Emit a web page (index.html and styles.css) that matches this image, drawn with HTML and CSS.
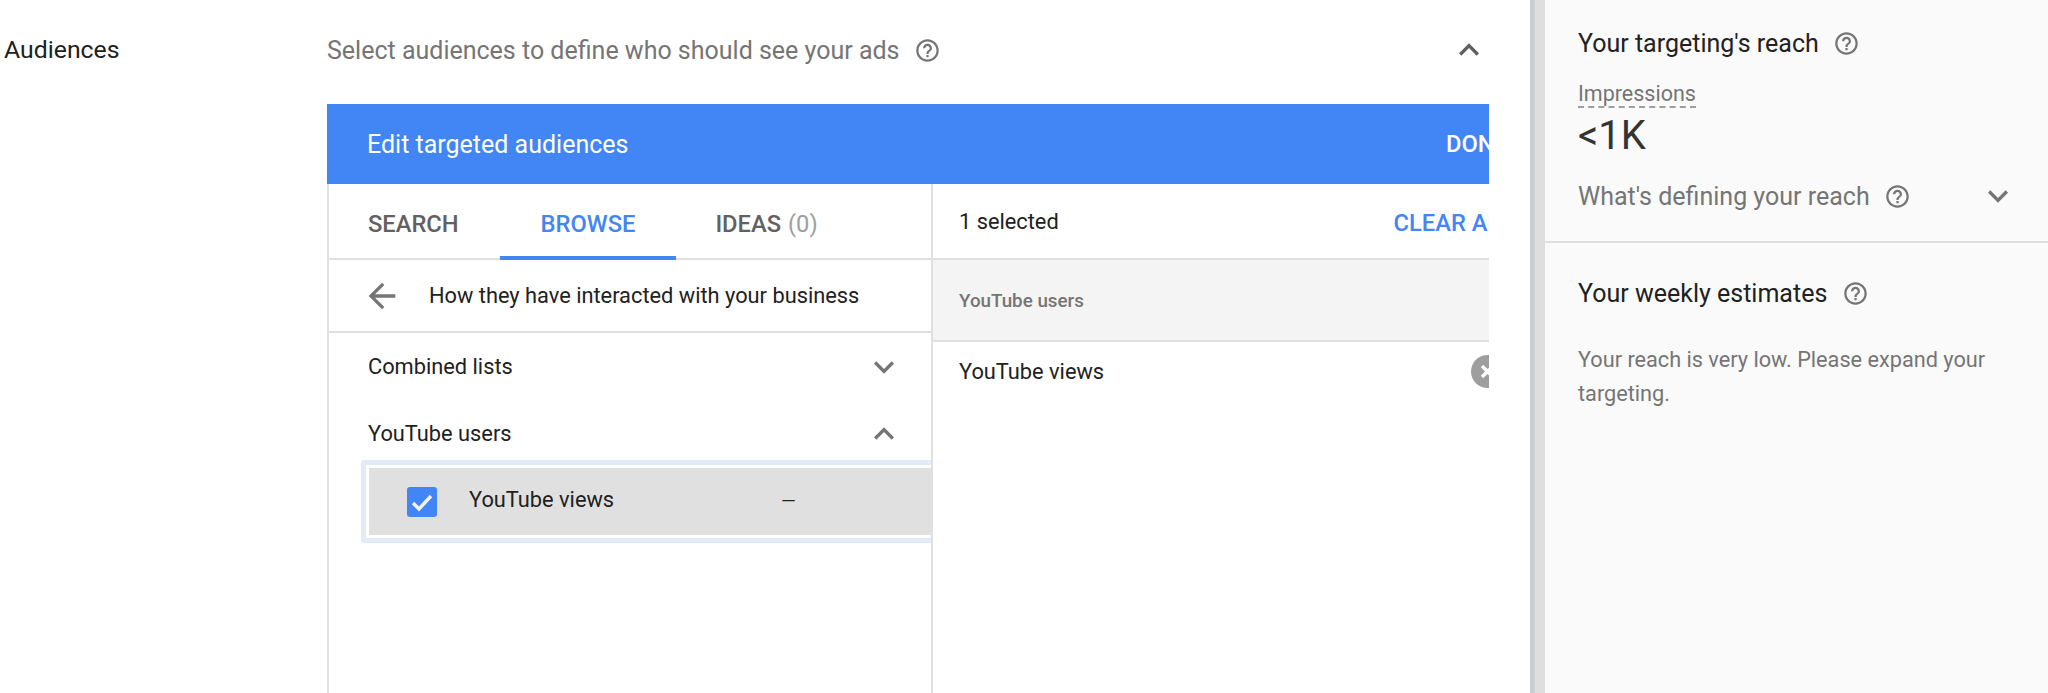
FILE: index.html
```html
<!DOCTYPE html>
<html lang="en">
<head>
    <meta charset="UTF-8">
    <title>Audiences</title>
    <link rel="stylesheet" href="styles.css">
</head>
<body>
    <svg class="defs" width="0" height="0">
        <symbol id="help" viewBox="0 0 24 24"><path d="M11 18h2v-2h-2v2zm1-16C6.48 2 2 6.48 2 12s4.48 10 10 10 10-4.48 10-10S17.52 2 12 2zm0 18c-4.41 0-8-3.59-8-8s3.59-8 8-8 8 3.59 8 8-3.59 8-8 8zm0-14c-2.21 0-4 1.79-4 4h2c0-1.1.9-2 2-2s2 .9 2 2c0 2-3 1.75-3 5h2c0-2.25 3-2.5 3-5 0-2.21-1.79-4-4-4z"/></symbol>
        <symbol id="up" viewBox="0 0 24 24"><path d="M12 8l-6 6 1.41 1.41L12 10.83l4.59 4.58L18 14z"/></symbol>
        <symbol id="down" viewBox="0 0 24 24"><path d="M16.59 8.59L12 13.17 7.41 8.59 6 10l6 6 6-6z"/></symbol>
    </svg>

    <div class="main">
        <div class="label">Audiences</div>
        <div class="content">
            <div class="summary">
                <span class="summary-text">Select audiences to define who should see your ads</span>
                <svg class="help"><use href="#help"/></svg>
                <svg class="chevron summary-chevron"><use href="#up"/></svg>
            </div>

            <div class="card">
                <div class="card-head">
                    <span>Edit targeted audiences</span>
                    <span class="done">DONE</span>
                </div>
                <div class="columns">
                    <div class="col-left">
                        <div class="tabs">
                            <div class="tab">SEARCH</div>
                            <div class="tab active">BROWSE</div>
                            <div class="tab">IDEAS <span class="count">(0)</span></div>
                        </div>
                        <div class="back-row">
                            <svg class="back" viewBox="0 0 24 24"><path d="M20 11H7.83l5.59-5.59L12 4l-8 8 8 8 1.41-1.41L7.83 13H20v-2z"/></svg>
                            <span>How they have interacted with your business</span>
                        </div>
                        <div class="group">
                            <span>Combined lists</span>
                            <svg class="chevron"><use href="#down"/></svg>
                        </div>
                        <div class="group">
                            <span>YouTube users</span>
                            <svg class="chevron"><use href="#up"/></svg>
                        </div>
                        <div class="focus-ring">
                            <div class="item">
                                <svg class="check" viewBox="0 0 30 30">
                                    <rect width="30" height="30" rx="3" fill="#4285f4"/>
                                    <path d="M6 16l6 6L24 9" fill="none" stroke="#f2f2f2" stroke-width="3.4"/>
                                </svg>
                                <span class="item-name">YouTube views</span>
                                <span class="item-dash">—</span>
                            </div>
                        </div>
                    </div>
                    <div class="col-right">
                        <div class="selected-head">
                            <span>1 selected</span>
                            <span class="clear">CLEAR ALL</span>
                        </div>
                        <div class="selected-group">YouTube users</div>
                        <div class="selected-row">
                            <span>YouTube views</span>
                            <svg class="remove" viewBox="0 0 33 33">
                                <circle cx="16.5" cy="16.5" r="16.5" fill="#9e9e9e"/>
                                <path d="M11 11l11 11M22 11L11 22" stroke="#fff" stroke-width="3.4"/>
                            </svg>
                        </div>
                    </div>
                </div>
            </div>
        </div>
    </div>

    <div class="stripe"></div>

    <div class="side">
        <div class="reach">
            <div class="side-title">Your targeting's reach <svg class="help"><use href="#help"/></svg></div>
            <div class="metric-label"><span>Impressions</span></div>
            <div class="metric">&lt;1K</div>
            <div class="defining">
                <span>What's defining your reach</span>
                <svg class="help dark"><use href="#help"/></svg>
                <svg class="chevron defining-chevron"><use href="#down"/></svg>
            </div>
        </div>
        <div class="weekly">
            <div class="side-title">Your weekly estimates <svg class="help"><use href="#help"/></svg></div>
            <p class="note">Your reach is very low. Please expand your targeting.</p>
        </div>
    </div>
</body>
</html>
```

FILE: styles.css
```css
html, body {
    margin: 0;
    height: 100%;
}
body {
    display: flex;
    height: 693px;
    overflow: hidden;
    font-family: Roboto, "Liberation Sans", sans-serif;
    font-size: 21.8px;
    color: #212121;
    background-color: #fff;
}
.defs {
    position: absolute;
}
svg {
    fill: #757575;
    flex: none;
}
.help {
    width: 27px;
    height: 27px;
    vertical-align: middle;
}
.chevron {
    width: 40px;
    height: 40px;
}

/* left part */
.main {
    width: 1530px;
    flex: none;
    display: flex;
}
.label {
    width: 323px;
    padding-left: 4px;
    padding-top: 36px;
    font-size: 24.8px;
    line-height: 28px;
}
.content {
    width: 1162px;
}
.summary {
    height: 104px;
    display: flex;
    align-items: center;
    padding-bottom: 4px;
    box-sizing: border-box;
    color: #757575;
    font-size: 25px;
}
.summary-text {
    margin-right: 14px;
}
.summary-chevron {
    margin-left: auto;
    fill: #616161;
}

/* audience editor */
.card {
    height: 589px;
    overflow: hidden;
}
.card-head {
    height: 80px;
    padding-left: 40px;
    display: flex;
    align-items: center;
    justify-content: space-between;
    background-color: #4285f4;
    color: #fff;
    font-size: 25px;
    white-space: nowrap;
    width: 1200px;
    box-sizing: border-box;
}
.done {
    font-size: 23.7px;
    font-weight: 500;
    margin-right: 19px;
}
.columns {
    display: flex;
    height: 509px;
}
.col-left {
    width: 606px;
    flex: none;
    box-sizing: border-box;
    border-left: 2px solid #e0e0e0;
    border-right: 2px solid #e0e0e0;
}
.tabs {
    display: flex;
    height: 74px;
    border-bottom: 2px solid #e0e0e0;
}
.tab {
    padding: 7px 41px 0;
    display: flex;
    align-items: center;
    gap: 7px;
    font-size: 23.7px;
    font-weight: 500;
    color: #616161;
    border-bottom: 4px solid transparent;
    margin-bottom: -2px;
}
.tab:first-child {
    padding-left: 39px;
}
.tab:last-child {
    padding-left: 39px;
}
.tab.active {
    color: #4285f4;
    border-bottom-color: #4285f4;
}
.count {
    font-weight: 400;
    color: #9e9e9e;
}
.back-row {
    height: 71px;
    display: flex;
    align-items: center;
    padding-left: 33px;
    border-bottom: 2px solid #e0e0e0;
}
.back {
    width: 40px;
    height: 40px;
    margin-right: 27px;
}
.group {
    height: 51px;
    display: flex;
    align-items: center;
    justify-content: space-between;
    padding: 0 27px 0 39px;
}
.group:nth-child(3) {
    margin-top: 8px;
}
.group:nth-child(4) {
    margin-top: 16px;
}
.focus-ring {
    margin: 1px 0 0 32px;
    border: 5px solid #e3ebf8;
    border-right: none;
    border-radius: 3px 0 0 3px;
    padding: 3px 0 3px 3px;
}
.item {
    height: 67px;
    display: flex;
    align-items: center;
    background-color: #e0e0e0;
    padding-left: 38px;
}
.check {
    width: 30px;
    height: 30px;
    margin-right: 32px;
}
.item-name {
    width: 312px;
    margin-bottom: 5px;
}
.item-dash {
    font-size: 19px;
    margin-bottom: 3px;
}
.col-right {
    width: 600px;
    flex: none;
}
.selected-head {
    height: 74px;
    display: flex;
    align-items: center;
    justify-content: space-between;
    padding-left: 26px;
}
.clear {
    font-size: 23.7px;
    font-weight: 500;
    color: #4285f4;
    margin-top: 4px;
    margin-right: 20px;
}
.selected-group {
    height: 78px;
    padding-top: 2px;
    display: flex;
    align-items: center;
    padding-left: 26px;
    background-color: #f4f4f4;
    border-top: 2px solid #e0e0e0;
    border-bottom: 2px solid #e0e0e0;
    font-size: 18.8px;
    font-weight: 500;
    color: #757575;
}
.selected-row {
    height: 58px;
    display: flex;
    align-items: center;
    justify-content: space-between;
    padding: 0 29px 0 26px;
}
.remove {
    width: 33px;
    height: 33px;
}

/* right part */
.stripe {
    width: 15px;
    flex: none;
    background-image: linear-gradient(to right, #c9ccd3 0, #c9ccd3 4px, #dedede 5px);
}
.side {
    flex: 1;
    background-color: #fafafa;
}
.reach {
    height: 243px;
    padding: 0 30px 0 33px;
    box-sizing: border-box;
    border-bottom: 2px solid #e0e0e0;
}
.side-title {
    font-size: 25px;
    line-height: 28px;
    white-space: nowrap;
}
.side-title .help {
    margin-left: 8px;
    margin-top: -3px;
}
.reach .side-title {
    padding-top: 30px;
}
.metric-label {
    margin-top: 23px;
    line-height: 25px;
    font-size: 21.5px;
    color: #757575;
}
.metric-label span {
    display: inline-block;
    border-bottom: 2px dashed #9e9e9e;
}
.metric {
    font-size: 40px;
    line-height: 50px;
    margin-top: 3px;
    color: #333;
}
.defining {
    display: flex;
    align-items: center;
    margin-top: 15px;
    font-size: 25px;
    color: #757575;
}
.help.dark {
    margin-left: 14px;
}
.defining-chevron {
    margin-left: auto;
}
.weekly {
    padding: 37px 33px 0;
}
.note {
    margin: 35px 0 0;
    line-height: 34px;
    color: #757575;
    font-size: 21.7px;
}
```
